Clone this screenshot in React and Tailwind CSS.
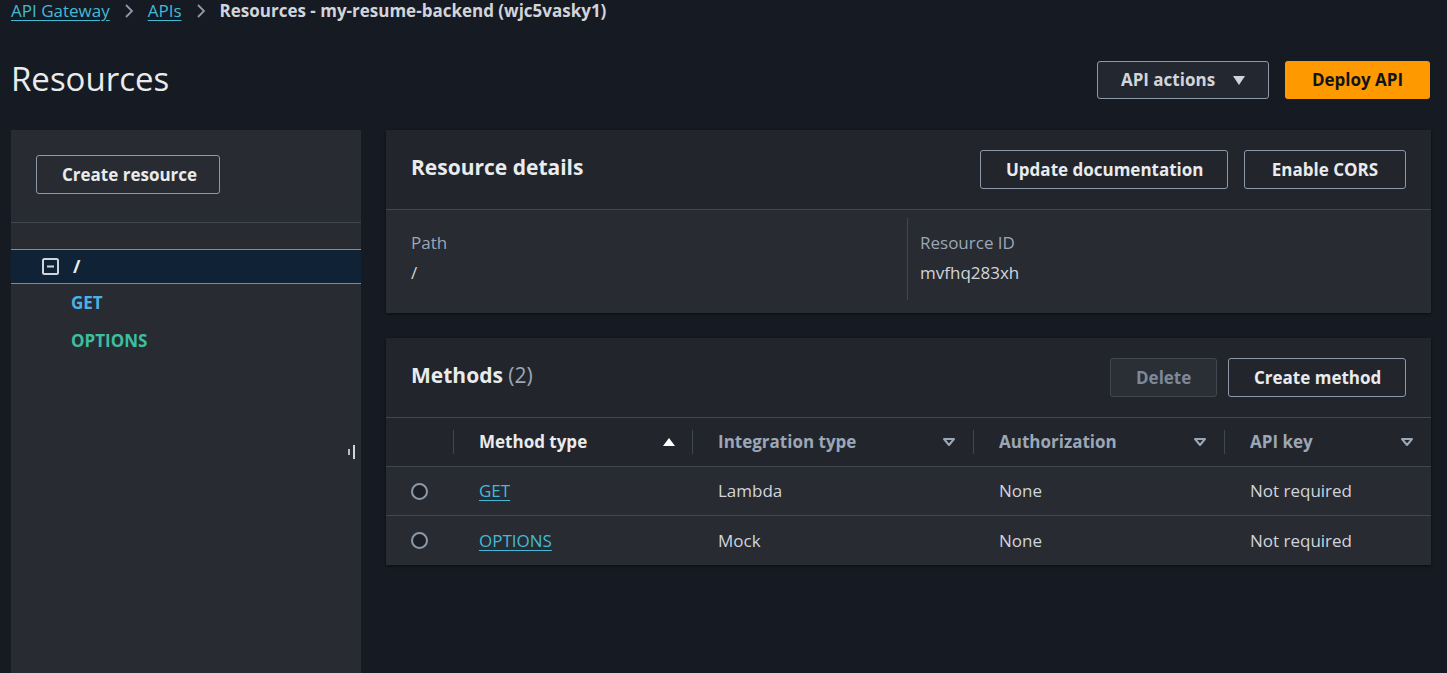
import React from 'react';

const font = { fontFamily: '"Open Sans", "Noto Sans", sans-serif' };

const Btn = ({ children, disabled, className = '' }) => (
  <button
    className={`h-[39px] px-[25px] rounded-[3px] border text-[17px] font-bold leading-none whitespace-nowrap ${
      disabled ? 'border-[#414750] text-[#7d8998] bg-[#2a2e35]' : 'border-[#8d99a8] text-[#e9ebed] bg-transparent'
    } ${className}`}
  >
    {children}
  </button>
);

const SortDown = () => (
  <svg width="14" height="10" viewBox="0 0 14 10" className="shrink-0">
    <path d="M2 2 H12 L7 8 Z" fill="none" stroke="#9ba7b6" strokeWidth="2" strokeLinejoin="round" />
  </svg>
);

const SortUp = () => (
  <svg width="14" height="10" viewBox="0 0 14 10" className="shrink-0">
    <path d="M1 9 H13 L7 1 Z" fill="#ffffff" />
  </svg>
);

const Radio = () => <span className="block w-[17px] h-[17px] rounded-full border-2 border-[#8d99a8] bg-[#1b1f26]" />;

const Chevron = () => (
  <svg width="10" height="14" viewBox="0 0 10 14" className="mx-[14px]">
    <path d="M2 1 L8 7 L2 13" fill="none" stroke="#8d99a8" strokeWidth="1.8" />
  </svg>
);

export default function App() {
  const cols = 'grid grid-cols-[68px_239px_281px_251px_206px]';
  return (
    <div className="w-[1447px] h-[673px] overflow-hidden bg-[#161a22] text-[#d1d5db]" style={font}>
      {/* breadcrumb */}
      <div className="flex items-center h-[22px] pl-[11px] text-[17px] leading-[22px]">
        <span className="text-[#44b9d6] underline underline-offset-[3px]">API Gateway</span>
        <Chevron />
        <span className="text-[#44b9d6] underline underline-offset-[3px]">APIs</span>
        <Chevron />
        <span className="font-bold text-[#d1d5db]">Resources - my-resume-backend (wjc5vasky1)</span>
      </div>

      {/* title row */}
      <div className="flex items-center justify-between pl-[11px] pr-[17px] mt-[39px] h-[38px]">
        <h1 className="text-[33px] font-normal text-[#e9ebed] leading-none -mt-[3px]">Resources</h1>
        <div className="flex gap-[16px]">
          <button className="h-[38px] w-[172px] flex items-center justify-center gap-[18px] rounded-[3px] border border-[#8d99a8] bg-[#232730] text-[17px] font-bold text-[#d1d5db] whitespace-nowrap">
            API actions
            <svg width="12" height="9" viewBox="0 0 12 9">
              <path d="M0 0 H12 L6 9 Z" fill="#d1d5db" />
            </svg>
          </button>
          <button className="h-[38px] w-[145px] rounded-[3px] bg-[#ff9900] text-[17px] font-bold text-[#0f141a] whitespace-nowrap">Deploy API</button>
        </div>
      </div>

      <div className="flex mt-[31px] pl-[11px] gap-[25px] h-[543px]">
        {/* sidebar */}
        <div className="relative w-[350px] shrink-0 bg-[#282b31] flex flex-col">
          <div className="px-[25px] pt-[25px] pb-[28px] border-b border-[#414750]">
            <Btn className="w-[184px] px-0">Create resource</Btn>
          </div>
          <div className="mt-[26px] h-[35px] flex items-center gap-[14px] pl-[31px] bg-[#0f2236] border-y border-[#3aa5cc]">
            <svg width="17" height="17" viewBox="0 0 17 17">
              <rect x="1" y="1" width="15" height="15" rx="1.5" fill="none" stroke="#d1d5db" strokeWidth="2" />
              <path d="M5 8.5 H12" stroke="#d1d5db" strokeWidth="2" />
            </svg>
            <span className="text-[18px] font-bold text-[#e9ebed]">/</span>
          </div>
          <div className="pl-[60px] pt-[8px] flex flex-col gap-[16px] text-[17px] font-bold leading-[22px]">
            <span className="text-[#4cb1e4]">GET</span>
            <span className="text-[#3cbfa0]">OPTIONS</span>
          </div>
          <div className="absolute left-[337px] top-[315px] flex items-center gap-[3px]">
            <span className="block w-[2px] h-[6px] bg-[#b5bcc6]" />
            <span className="block w-[2px] h-[14px] bg-[#d1d5db]" />
          </div>
        </div>

        {/* main */}
        <div className="w-[1045px] flex flex-col gap-[25px]">
          {/* Resource details */}
          <div className="bg-[#22252c] shadow-[0_1px_3px_rgba(0,0,0,0.5)]">
            <div className="h-[80px] flex items-center justify-between pl-[25px] pr-[25px] border-b border-[#414750]">
              <h2 className="text-[21px] font-bold text-[#e9ebed] -mt-[3px]">Resource details</h2>
              <div className="flex gap-[16px]">
                <Btn className="w-[248px] px-0">Update documentation</Btn>
                <Btn className="w-[162px] px-0">Enable CORS</Btn>
              </div>
            </div>
            <div className="bg-[#282b31] h-[103px] flex pt-[8px]">
              <div className="w-[522px] pl-[25px] pt-[14px] border-r border-[#414750] h-[82px]">
                <div className="text-[17px] text-[#9ba7b6] leading-[22px]">Path</div>
                <div className="text-[17px] text-[#d1d5db] leading-[22px] mt-[8px]">/</div>
              </div>
              <div className="pl-[12px] pt-[14px]">
                <div className="text-[17px] text-[#9ba7b6] leading-[22px]">Resource ID</div>
                <div className="text-[17px] text-[#d1d5db] leading-[22px] mt-[8px]">mvfhq283xh</div>
              </div>
            </div>
          </div>

          {/* Methods */}
          <div className="bg-[#22252c] shadow-[0_1px_3px_rgba(0,0,0,0.5)]">
            <div className="h-[80px] flex items-center justify-between pl-[25px] pr-[25px] border-b border-[#414750]">
              <h2 className="text-[21px] font-bold text-[#e9ebed] -mt-[3px]">
                Methods <span className="font-normal text-[#9ba7b6]">(2)</span>
              </h2>
              <div className="flex gap-[11px]">
                <Btn disabled className="w-[107px] px-0">Delete</Btn>
                <Btn className="w-[178px] px-0">Create method</Btn>
              </div>
            </div>
            <div className={`${cols} h-[49px] items-center border-b border-[#414750] text-[17px] font-bold`}>
              <div className="h-[24px] border-r border-[#414750]" />
              <div className="flex items-center justify-between pl-[25px] pr-[16px] h-[24px] border-r border-[#414750] text-[#e9ebed]">
                Method type <SortUp />
              </div>
              <div className="flex items-center justify-between pl-[25px] pr-[17px] h-[24px] border-r border-[#414750] text-[#9ba7b6]">
                Integration type <SortDown />
              </div>
              <div className="flex items-center justify-between pl-[25px] pr-[17px] h-[24px] border-r border-[#414750] text-[#9ba7b6]">
                Authorization <SortDown />
              </div>
              <div className="flex items-center justify-between pl-[25px] pr-[17px] h-[24px] text-[#9ba7b6]">
                API key <SortDown />
              </div>
            </div>
            {[
              ['GET', 'Lambda', 'None', 'Not required'],
              ['OPTIONS', 'Mock', 'None', 'Not required'],
            ].map((r, i) => (
              <div
                key={r[0]}
                className={`${cols} h-[49px] items-center bg-[#282b31] text-[17px] text-[#d1d5db] ${i === 0 ? 'border-b border-[#414750]' : ''}`}
              >
                <div className="pl-[25px]"><Radio /></div>
                <div className="pl-[25px]">
                  <span className="text-[#44b9d6] underline underline-offset-[3px]">{r[0]}</span>
                </div>
                <div className="pl-[25px]">{r[1]}</div>
                <div className="pl-[25px]">{r[2]}</div>
                <div className="pl-[25px]">{r[3]}</div>
              </div>
            ))}
          </div>
        </div>
      </div>
    </div>
  );
}
